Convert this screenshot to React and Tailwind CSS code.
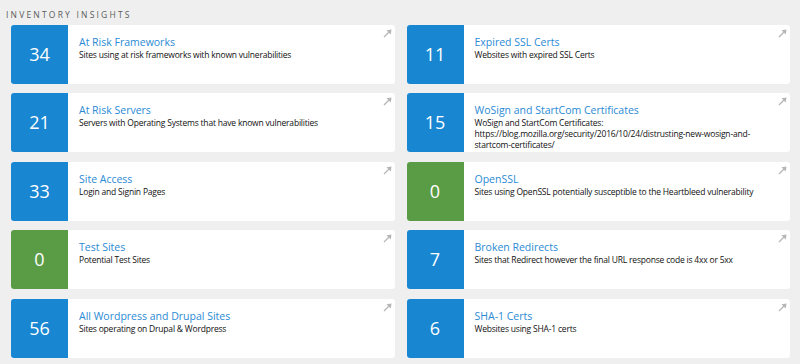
const insights = [
  { n: 34, color: "blue", title: "At Risk Frameworks", desc: "Sites using at risk frameworks with known vulnerabilities" },
  { n: 11, color: "blue", title: "Expired SSL Certs", desc: "Websites with expired SSL Certs" },
  { n: 21, color: "blue", title: "At Risk Servers", desc: "Servers with Operating Systems that have known vulnerabilities" },
  {
    n: 15,
    color: "blue",
    title: "WoSign and StartCom Certificates",
    desc: "WoSign and StartCom Certificates: https://blog.mozilla.org/security/2016/10/24/distrusting-new-wosign-and-startcom-certificates/",
  },
  { n: 33, color: "blue", title: "Site Access", desc: "Login and Signin Pages" },
  { n: 0, color: "green", title: "OpenSSL", desc: "Sites using OpenSSL potentially susceptible to the Heartbleed vulnerability" },
  { n: 0, color: "green", title: "Test Sites", desc: "Potential Test Sites" },
  { n: 7, color: "blue", title: "Broken Redirects", desc: "Sites that Redirect however the final URL response code is 4xx or 5xx" },
  { n: 56, color: "blue", title: "All Wordpress and Drupal Sites", desc: "Sites operating on Drupal & Wordpress" },
  { n: 6, color: "blue", title: "SHA-1 Certs", desc: "Websites using SHA-1 certs" },
];

// small diagonal "open" arrow in the card corner
function CornerArrow() {
  return (
    <svg className="absolute right-[3px] top-[4px]" width="9" height="9" viewBox="0 0 9 9">
      <line x1="1" y1="8" x2="6.5" y2="2.5" stroke="#b5b5b5" strokeWidth="1.2" />
      <polygon points="8.5,0.5 3.5,1.2 7.8,5.5" fill="#b5b5b5" />
    </svg>
  );
}

function InsightCard({ item }) {
  return (
    <div className="relative flex h-[59px] rounded-[3px] bg-white overflow-hidden">
      <div
        className={`flex w-[57px] shrink-0 items-center justify-center text-[18px] text-white ${
          item.color === "green" ? "bg-[#5a9c45]" : "bg-[#1886d1]"
        }`}
      >
        {item.n}
      </div>
      <div className="pl-[11px] pr-[32px] pt-[11px]">
        <div className="text-[10.5px] leading-[13px] text-[#2a8ad4]">{item.title}</div>
        <div className="text-[8.5px] leading-[11px] tracking-[-0.2px] text-[#111]">{item.desc}</div>
      </div>
      <CornerArrow />
    </div>
  );
}

export default function App() {
  return (
    <div className="min-h-[364px] bg-[#eeefee] font-['Open_Sans',sans-serif]">
      <div className="px-[6px] pt-[9px] text-[8.5px] leading-[12px] tracking-[2.2px] text-[#5c5c5c]">INVENTORY INSIGHTS</div>
      <div className="ml-[11px] mr-[10px] mt-[3.5px] grid grid-cols-2 gap-x-[12px] gap-y-[9.5px]">
        {insights.map((item) => (
          <InsightCard key={item.title} item={item} />
        ))}
      </div>
    </div>
  );
}
